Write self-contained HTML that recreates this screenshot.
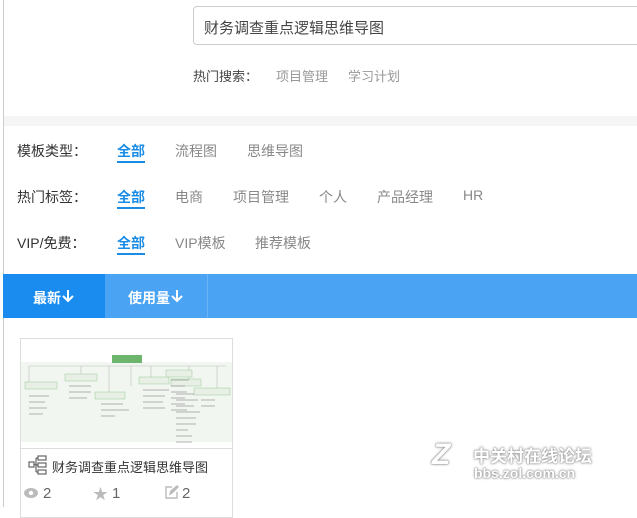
<!DOCTYPE html>
<html><head><meta charset="utf-8"><style>
*{margin:0;padding:0;box-sizing:border-box}
body{width:637px;height:507px;overflow:hidden;background:#fff;font-family:"Liberation Sans","Noto Sans CJK SC",sans-serif;position:relative;color:#333}
.a{position:absolute;white-space:nowrap}
.lab{font-size:14px;color:#333}
.opt{font-size:14px;color:#888}
.on{font-size:14px;color:#1a8ce6;font-weight:bold}
.ul{position:absolute;height:2px;background:#1a8ce6}
.wm{color:#fff;font-weight:bold;text-shadow:0 0 1px #777,0 0 2px #999,0 0 3px #bbb}
</style></head><body>
<div class="a" style="left:3px;top:0;width:1px;height:507px;background:#ccc"></div>
<div class="a" style="left:193px;top:6px;width:460px;height:39px;border:1px solid #ccc;border-radius:4px"></div>
<div class="a" style="left:204px;top:17px;font-size:15px;color:#444">财务调查重点逻辑思维导图</div>
<div class="a" style="left:193px;top:66px;font-size:13px;color:#444">热门搜索：</div>
<div class="a" style="left:276px;top:66px;font-size:13px;color:#999">项目管理</div>
<div class="a" style="left:348px;top:66px;font-size:13px;color:#999">学习计划</div>
<div class="a" style="left:4px;top:116px;width:633px;height:10px;background:#f5f5f5"></div>

<div class="a lab" style="left:17px;top:141px">模板类型：</div>
<div class="a on" style="left:117px;top:141px">全部</div><div class="ul" style="left:117px;top:161px;width:28px"></div>
<div class="a opt" style="left:175px;top:141px">流程图</div>
<div class="a opt" style="left:247px;top:141px">思维导图</div>

<div class="a lab" style="left:17px;top:187px">热门标签：</div>
<div class="a on" style="left:117px;top:187px">全部</div><div class="ul" style="left:117px;top:207px;width:28px"></div>
<div class="a opt" style="left:175px;top:187px">电商</div>
<div class="a opt" style="left:233px;top:187px">项目管理</div>
<div class="a opt" style="left:319px;top:187px">个人</div>
<div class="a opt" style="left:377px;top:187px">产品经理</div>
<div class="a opt" style="left:463px;top:187px">HR</div>

<div class="a lab" style="left:17px;top:233px">VIP/免费：</div>
<div class="a on" style="left:117px;top:233px">全部</div><div class="ul" style="left:117px;top:253px;width:28px"></div>
<div class="a opt" style="left:175px;top:233px">VIP模板</div>
<div class="a opt" style="left:255px;top:233px">推荐模板</div>

<div class="a" style="left:3px;top:274px;width:634px;height:44px;background:#4aa3f3"></div>
<div class="a" style="left:3px;top:274px;width:102px;height:44px;background:#1a8cf0"></div>
<div class="a" style="left:207px;top:274px;width:1px;height:44px;background:#6bb4f5"></div>
<div class="a" style="left:33px;top:288px;font-size:14px;color:#fff;font-weight:bold">最新</div>
<svg class="a" style="left:62px;top:289px" width="12" height="14" viewBox="0 0 12 14" fill="none" stroke="#fff" stroke-width="2"><path d="M6 1v11M1 7l5 5 5-5"/></svg>
<div class="a" style="left:128px;top:288px;font-size:14px;color:#fff;font-weight:bold">使用量</div>
<svg class="a" style="left:171px;top:289px" width="12" height="14" viewBox="0 0 12 14" fill="none" stroke="#fff" stroke-width="2"><path d="M6 1v11M1 7l5 5 5-5"/></svg>

<div class="a" style="left:20px;top:338px;width:213px;height:180px;border:1px solid #ddd"></div>
<div class="a" style="left:21px;top:362px;width:211px;height:80px;background:#f2f6f0"></div>
<svg class="a" style="left:21px;top:350px" width="211" height="95" viewBox="0 0 211 95">
<rect x="91" y="5" width="30" height="8" fill="#6db56d"/>
<path d="M8 16H205M8 16V32M60 16V24M88 16V42M130 16V27M168 16V29M196 16V38M110 16V36" stroke="#bbb" stroke-width=".6" fill="none"/>
<g fill="#e8efe4" stroke="#9c9" stroke-width=".5">
<rect x="4" y="32" width="32" height="7"/><rect x="44" y="24" width="32" height="7"/><rect x="74" y="42" width="30" height="7"/><rect x="118" y="27" width="30" height="7"/><rect x="150" y="29" width="30" height="7"/><rect x="145" y="20" width="26" height="7"/><rect x="173" y="38" width="36" height="7"/></g>
<g stroke="#999" stroke-width=".8"><path d="M8 46h20M8 52h16M8 58h18M8 64h14M48 36h22M48 42h22M48 48h18M80 54h22M80 60h28M80 66h14M122 40h26M122 46h22M122 52h20M122 58h22M150 30h18M150 36h14M150 42h16M150 48h14M150 54h14M150 60h16M155 44h18M155 50h22M155 56h18M155 62h24M155 68h20M155 74h20M155 80h12M155 86h16M155 92h16M180 50h14M180 56h14"/></g>
</svg>
<div class="a" style="left:21px;top:448px;width:211px;height:1px;background:#ddd"></div>
<svg class="a" style="left:28px;top:455px" width="20" height="20" viewBox="0 0 20 20" fill="none" stroke="#666" stroke-width="1.2"><rect x="1" y="7" width="5" height="5"/><rect x="10" y="1" width="8" height="4"/><rect x="10" y="8" width="8" height="4"/><rect x="10" y="15" width="8" height="4"/><path d="M6 9.5h2M8 3v14M8 3h2M8 10h2M8 17h2"/></svg>
<div class="a" style="left:52px;top:457px;font-size:13px;color:#333">财务调查重点逻辑思维导图</div>
<svg class="a" style="left:24px;top:488px" width="14" height="10" viewBox="0 0 14 10"><ellipse cx="7" cy="5" rx="7" ry="5" fill="#bbb"/><circle cx="7" cy="5" r="2.2" fill="#fff"/></svg>
<div class="a" style="left:43px;top:485px;font-size:15px;color:#666">2</div>
<div class="a" style="left:93px;top:483px;font-size:15px;color:#bbb">★</div>
<div class="a" style="left:112px;top:485px;font-size:15px;color:#666">1</div>
<svg class="a" style="left:164px;top:485px" width="15" height="15" viewBox="0 0 15 15" fill="none" stroke="#bbb" stroke-width="1.4"><path d="M8 2H2v11h11V7"/><path d="M6 9l1-3 6-5 1 1-6 6z" fill="#bbb"/></svg>
<div class="a" style="left:182px;top:485px;font-size:15px;color:#666">2</div>

<div class="a wm" style="left:432px;top:438px;font-size:30px;font-style:italic">Z</div>
<div class="a wm" style="left:473px;top:442px;font-size:17px">中关村在线论坛</div>
<div class="a wm" style="left:474px;top:465px;font-size:14px">bbs.zol.com.cn</div>
</body></html>
